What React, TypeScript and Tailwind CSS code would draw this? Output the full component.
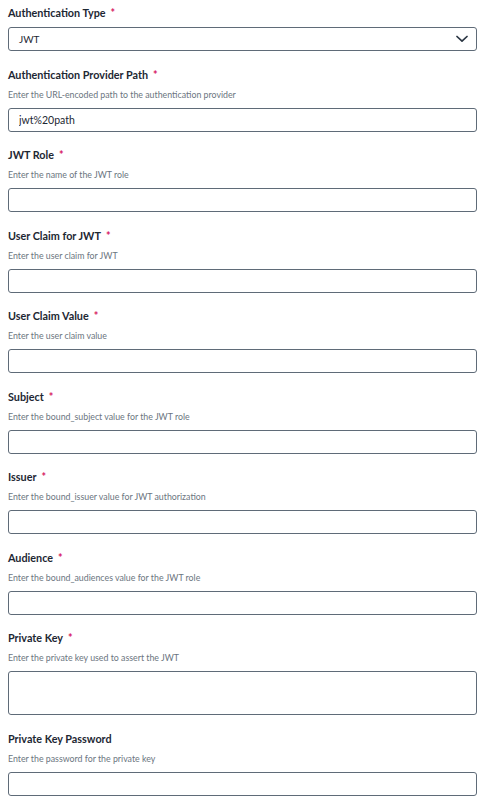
type Field = {
  label: string;
  hint?: string;
  required?: boolean;
  value?: string;
  multiline?: boolean;
};

const FIELDS: Field[] = [
  {
    label: "Authentication Provider Path",
    hint: "Enter the URL-encoded path to the authentication provider",
    required: true,
    value: "jwt%20path",
  },
  { label: "JWT Role", hint: "Enter the name of the JWT role", required: true },
  { label: "User Claim for JWT", hint: "Enter the user claim for JWT", required: true },
  { label: "User Claim Value", hint: "Enter the user claim value", required: true },
  { label: "Subject", hint: "Enter the bound_subject value for the JWT role", required: true },
  { label: "Issuer", hint: "Enter the bound_issuer value for JWT authorization", required: true },
  { label: "Audience", hint: "Enter the bound_audiences value for the JWT role", required: true },
  {
    label: "Private Key",
    hint: "Enter the private key used to assert the JWT",
    required: true,
    multiline: true,
  },
  { label: "Private Key Password", hint: "Enter the password for the private key" },
];

function Label({ text, required }: { text: string; required?: boolean }) {
  return (
    <label className="block h-4 text-[10.8px] font-bold leading-4 text-[#1d2733]">
      {text}
      {required && <span className="ml-[5px] text-[#d6165f]">*</span>}
    </label>
  );
}

export default function App() {
  return (
    <div
      className="min-h-screen bg-white pt-[5px] pl-2 pr-[10px]"
      style={{ fontFamily: "Lato, 'Noto Sans', sans-serif" }}
    >
      <div className="mb-[15.5px]">
        <Label text="Authentication Type" required />
        <div className="mt-[6px] flex h-6 items-center justify-between rounded-[3px] border border-[#5f6b78] pl-[10px] pr-[7px]">
          <span className="text-[10px] text-[#1d2733]">JWT</span>
          <svg width="12" height="8" viewBox="0 0 12 8" fill="none" className="mr-px">
            <path d="M1 1.5 6 6.2 11 1.5" stroke="#2b3643" strokeWidth="1.7" strokeLinecap="round" strokeLinejoin="round" />
          </svg>
        </div>
      </div>

      {FIELDS.map((f) => (
        <div key={f.label} className="mb-[15.5px]">
          <Label text={f.label} required={f.required} />
          <p className="mt-[6px] h-3 text-[8.8px] leading-3 text-[#6b7580]">{f.hint}</p>
          {f.multiline ? (
            <textarea className="mt-[7px] block h-11 w-full resize-none rounded-[3px] border border-[#5f6b78] px-[10px] text-[11px] outline-none" />
          ) : (
            <input
              type="text"
              defaultValue={f.value}
              className="mt-[7px] block h-6 w-full rounded-[3px] border border-[#5f6b78] px-[10px] text-[10.5px] text-[#1d2733] outline-none"
            />
          )}
        </div>
      ))}
    </div>
  );
}
